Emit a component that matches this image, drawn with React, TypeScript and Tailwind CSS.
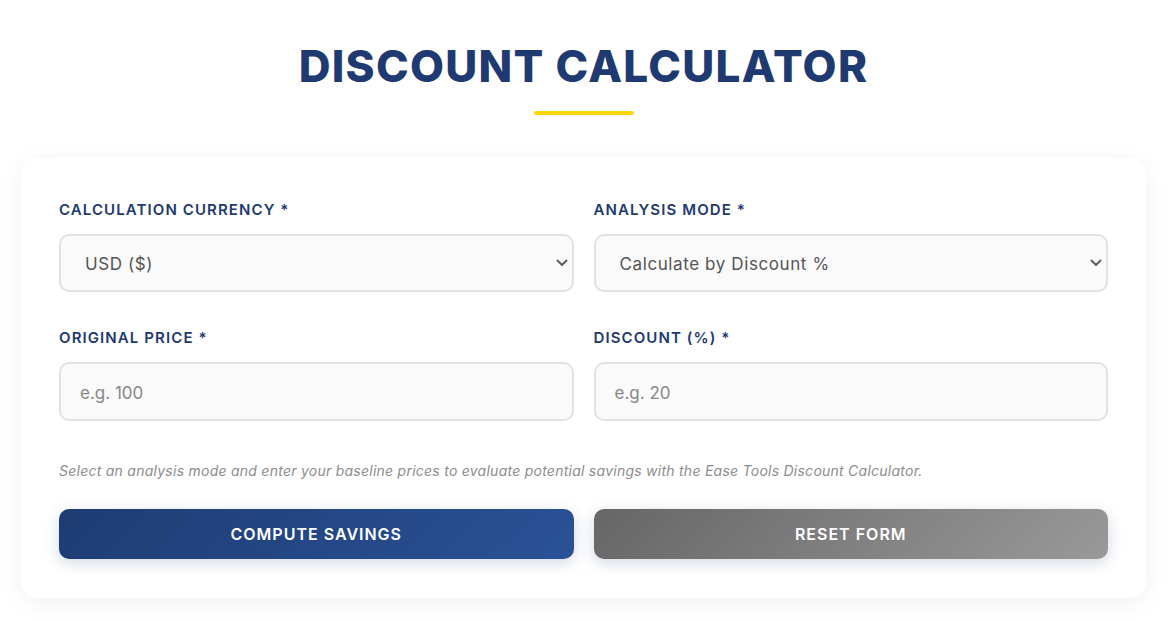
import React from 'react';

const Chevron: React.FC = () => (
  <svg
    className="pointer-events-none absolute right-[6px] top-1/2 -translate-y-1/2"
    width="12"
    height="8"
    viewBox="0 0 12 8"
    fill="none"
  >
    <path d="M1.5 1.5 L6 6 L10.5 1.5" stroke="#5f5f5f" strokeWidth="2" strokeLinecap="round" strokeLinejoin="round" />
  </svg>
);

const Label: React.FC<{ children: React.ReactNode }> = ({ children }) => (
  <label className="mb-[13px] block pt-px text-[15px] font-semibold uppercase leading-[22px] tracking-[1.1px] text-[#1e3a6e]">
    {children}
  </label>
);

const fieldBase =
  'h-[58px] w-full rounded-[10px] border-2 border-[#e2e2e2] bg-[#fafafa] pt-[3px] text-[17px] text-[#555] outline-none';

const App: React.FC = () => {
  return (
    <div className="min-h-screen bg-white pl-[21px] pr-[23px] pt-[44px] pb-10 font-['Inter',sans-serif]">
      <h1 className="text-center text-[44px] font-extrabold leading-[44px] tracking-[1.3px] text-[#1e3a70]">
        DISCOUNT CALCULATOR
      </h1>
      <div className="mx-auto mt-[23px] h-1 w-[100px] rounded-full bg-[#ffd600]" />

      {/* Form card */}
      <div className="mt-[43px] rounded-2xl bg-white px-[38px] pt-[40px] pb-[39px] shadow-[0_5px_25px_rgba(0,0,0,0.06)]">
        <div className="grid grid-cols-2 gap-x-5 gap-y-[34px]">
          <div>
            <Label>Calculation Currency *</Label>
            <div className="relative">
              <select className={`${fieldBase} appearance-none pl-[24px] tracking-[0.6px]`} defaultValue="USD">
                <option value="USD">USD ($)</option>
              </select>
              <Chevron />
            </div>
          </div>
          <div>
            <Label>Analysis Mode *</Label>
            <div className="relative">
              <select className={`${fieldBase} appearance-none pl-[24px] tracking-[0.6px]`} defaultValue="pct">
                <option value="pct">Calculate by Discount %</option>
              </select>
              <Chevron />
            </div>
          </div>
          <div>
            <Label>Original Price *</Label>
            <input className={`${fieldBase} h-[59px] px-[19px] placeholder:text-[#888]`} placeholder="e.g. 100" />
          </div>
          <div>
            <Label>Discount (%) *</Label>
            <input className={`${fieldBase} h-[59px] px-[19px] placeholder:text-[#888]`} placeholder="e.g. 20" />
          </div>
        </div>

        <p className="mt-[40px] text-[14px] italic leading-5 tracking-[0.25px] text-[#8d8d8d]">
          Select an analysis mode and enter your baseline prices to evaluate potential savings with the Ease Tools Discount Calculator.
        </p>

        <div className="mt-[28px] grid grid-cols-2 gap-5">
          <button className="h-[50px] rounded-[10px] bg-[linear-gradient(135deg,#1e3c72,#2a5298)] text-[16px] font-semibold tracking-[1px] text-white shadow-[0_4px_15px_rgba(30,60,114,0.2)]">
            COMPUTE SAVINGS
          </button>
          <button className="h-[50px] rounded-[10px] bg-[linear-gradient(135deg,#666,#999)] text-[16px] font-semibold tracking-[1px] text-white shadow-[0_4px_15px_rgba(30,60,114,0.2)]">
            RESET FORM
          </button>
        </div>
      </div>
    </div>
  );
};

export default App;
